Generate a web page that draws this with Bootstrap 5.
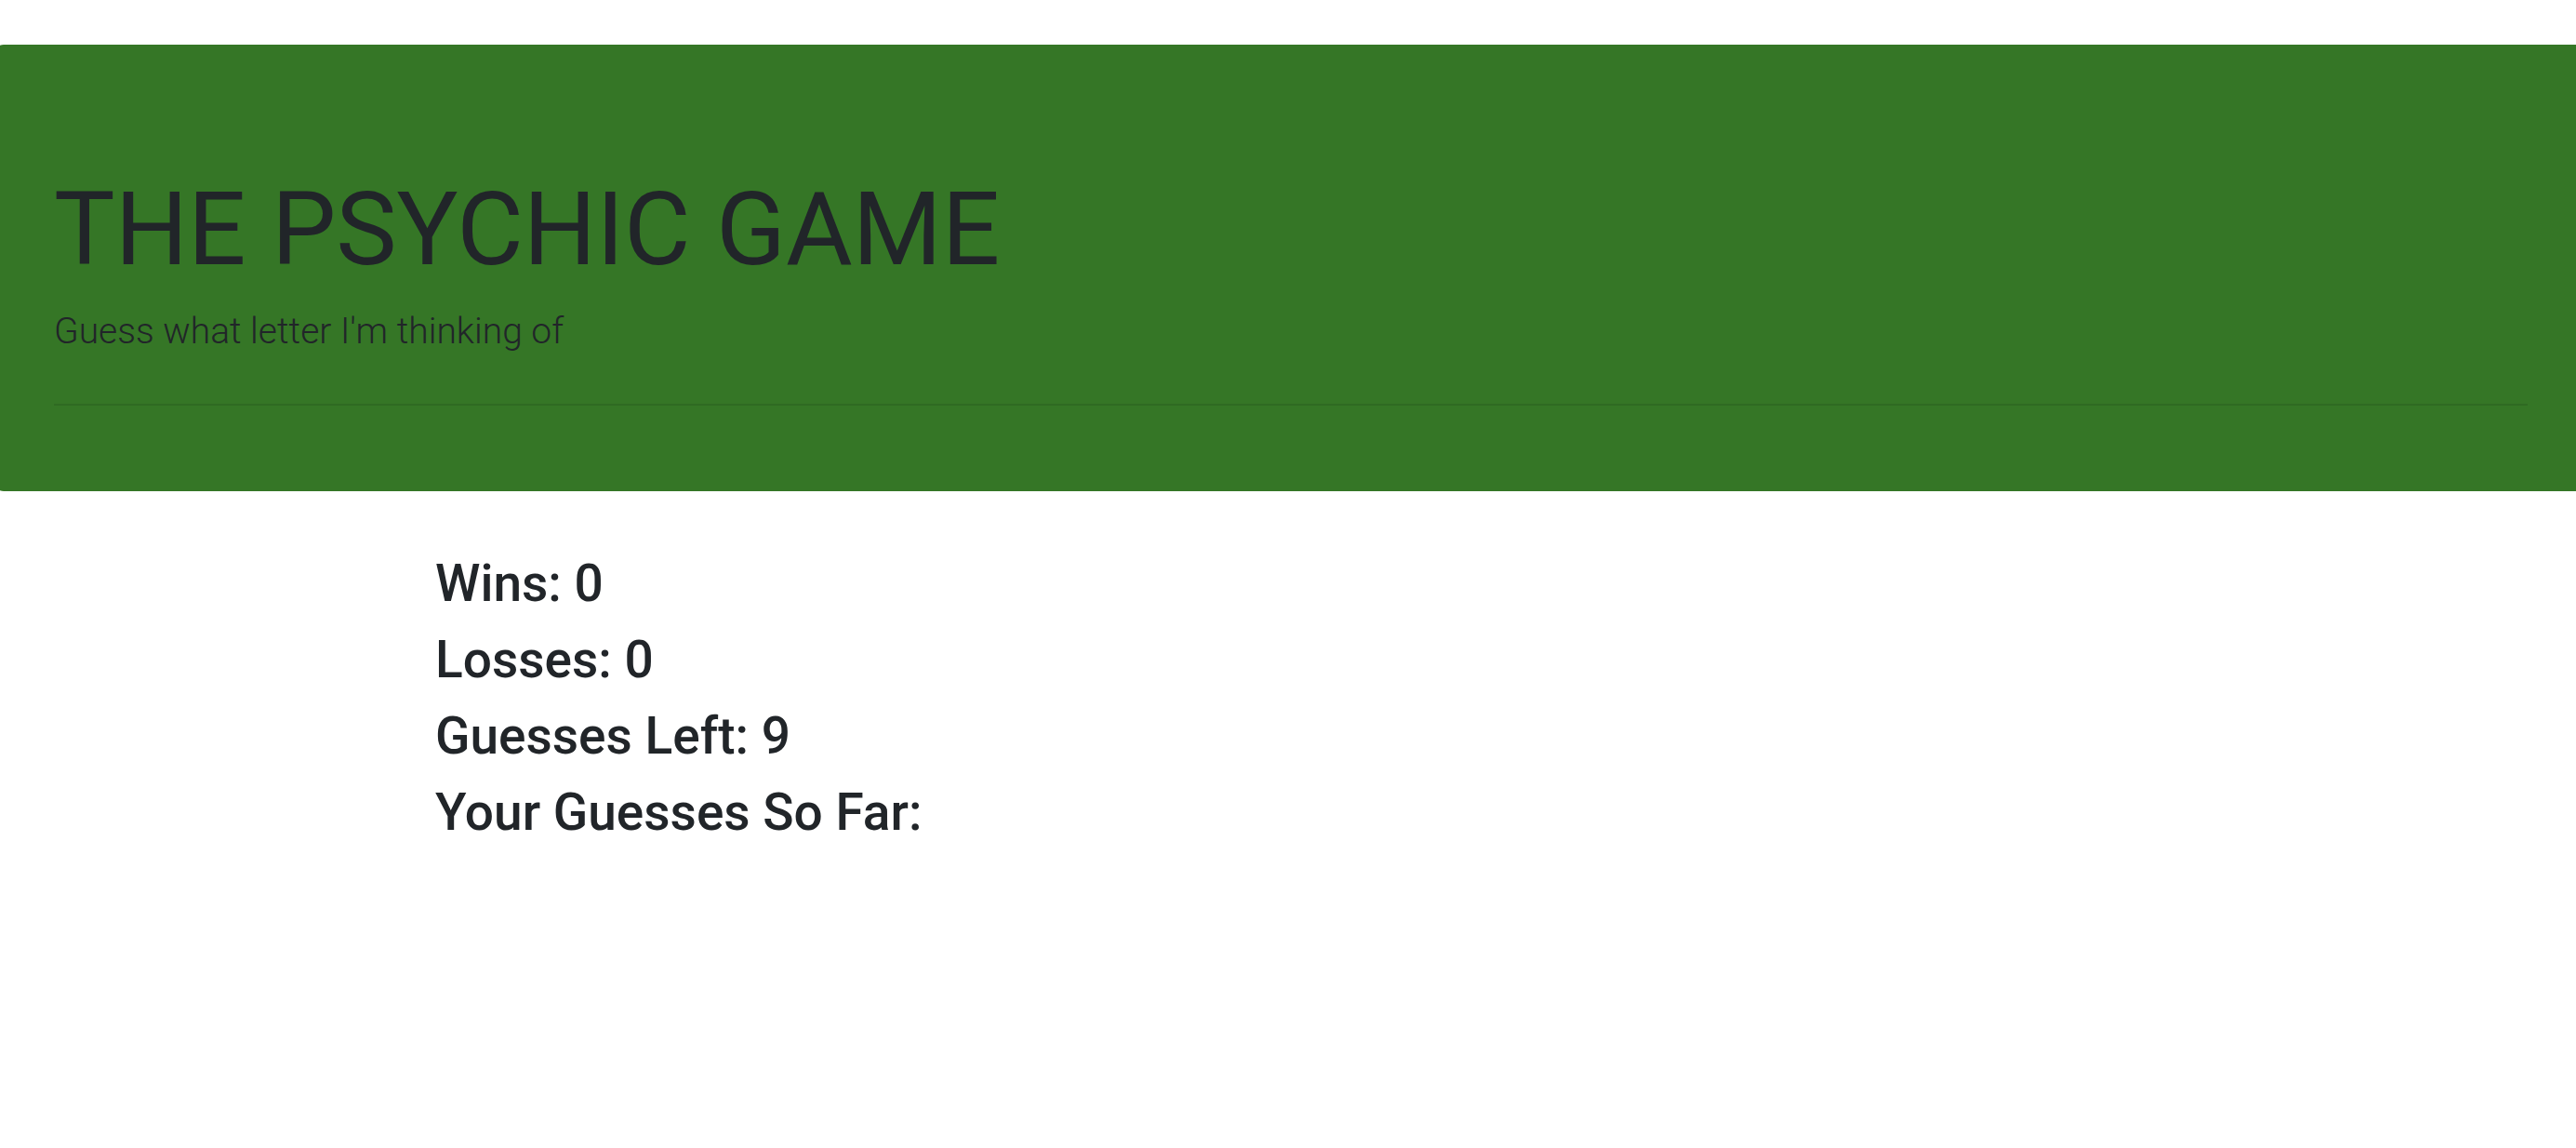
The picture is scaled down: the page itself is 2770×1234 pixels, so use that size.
<!DOCTYPE html>
<html lang="en">
<head>
<meta charset="utf-8">
<meta name="viewport" content="width=device-width, initial-scale=1">
<title>The Psychic Game</title>
<link href="https://cdn.jsdelivr.net/npm/bootstrap@5.3.0/dist/css/bootstrap.min.css" rel="stylesheet">
<style>
body { font-family: Roboto, Inter, sans-serif; color: #212529; }
.hero { background: #357626; border-radius: 10px; padding: 132px 64px 60px; margin: 48px -12px 66px -6px; }
.hero h1 { font-size: 110px; font-weight: 400; line-height: 134px; margin-bottom: 12px; }
.hero .lead { font-size: 39px; font-weight: 300; line-height: 60px; margin-bottom: 0; }
.hero hr { margin: 48px 0 32px; border-top: 2px solid #000; opacity: .1; }
.score { max-width: 1920px; padding: 0 43px; }
.score h2 { font-size: 55px; font-weight: 500; line-height: 66px; margin-bottom: 16px; }
</style>
</head>
<body class="overflow-x-hidden">
<header class="hero">
<h1>THE PSYCHIC GAME</h1>
<p class="lead">Guess what letter I'm thinking of</p>
<hr>
</header>
<main class="score mx-auto">
<h2>Wins: <span>0</span></h2>
<h2>Losses: <span>0</span></h2>
<h2>Guesses Left: <span>9</span></h2>
<h2>Your Guesses So Far: <span></span></h2>
</main>
<script src="https://cdn.jsdelivr.net/npm/bootstrap@5.3.0/dist/js/bootstrap.bundle.min.js"></script>
</body>
</html>
